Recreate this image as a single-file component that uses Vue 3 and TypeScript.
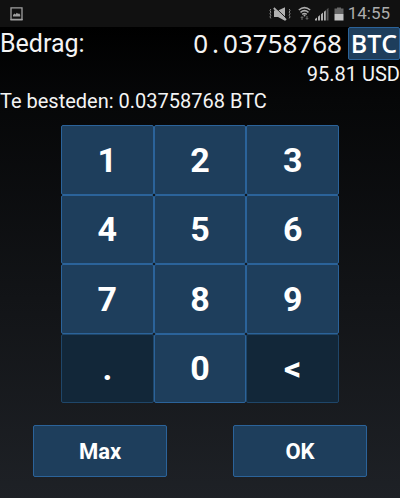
<script setup lang="ts">
import { computed, ref } from 'vue'

const time = '14:55'
const amount = ref('0.03758768')
const currency = ref('BTC')
const fiat = '95.81 USD'
const spendable = '0.03758768'
const keys: string[] = ['1', '2', '3', '4', '5', '6', '7', '8', '9', '.', '0', '<']

const parts = computed(() => amount.value.split('.'))
const isMuted = (key: string): boolean => key === '.' || key === '<'

function press(key: string): void {
  if (key === '<') {
    amount.value = amount.value.slice(0, -1) || '0'
  } else if (key !== '.' || !amount.value.includes('.')) {
    amount.value += key
  }
}

function useMax(): void {
  amount.value = spendable
}
</script>

<template>
  <div class="screen">
    <header class="status">
      <svg class="picture" width="13" height="14" viewBox="0 0 13 14" aria-hidden="true">
        <path d="M1 .9h11v11.4H1z" fill="none" stroke="#a0a0a0" stroke-width="1.3" />
        <path d="M.4 12h12.2v1.5H.4z" fill="#a0a0a0" />
        <path d="M3 9.5V8l1.5-1.4L5.6 7.5l1.2-1.8L8.2 7l.8-.7 1.2 1.4v1.8z" fill="#a0a0a0" />
      </svg>
      <div class="indicators">
        <svg width="22" height="14" viewBox="0 0 22 14" aria-hidden="true">
          <path d="M1.800 2l-.8 1.500.8 1.600-.8 1.600.8 1.600-.8 1.600.8 1.500M20.200 2l.8 1.500-.8 1.600.8 1.600-.8 1.600.8 1.600-.8 1.500" fill="none" stroke="#8c8c8c" stroke-width="1" />
          <path d="M5 3.500H9l7-3.300v13.600L9 10H5z" fill="#b0b0b0" />
          <path d="M6.200.6L18 11.800" stroke="#111" stroke-width="1" />
          <path d="M4.800 1L17 13" stroke="#b0b0b0" stroke-width="1.800" />
        </svg>
        <svg class="wifi" width="13" height="15" viewBox="0 0 13 15" aria-hidden="true">
          <path d="M.8 4Q6.500-.8 12.200 4M2.500 6.300Q6.500 3 10.500 6.300M4.200 8.300Q6.500 6.600 8.800 8.300" fill="none" stroke="#acacac" stroke-width="1.500" />
          <circle cx="6.500" cy="9.500" r="1" fill="#acacac" />
          <path d="M4 10l1.800 2H4.600v2H3.400v-2H2.200zM9 14l-1.800-2h1.200v-2h1.200v2h1.200z" fill="#606060" />
        </svg>
        <svg class="signal" width="14" height="14" viewBox="0 0 14 14" aria-hidden="true">
          <path d="M0 13.500V12l2-1.500v3zM3 13.500V9.700l2-1.600v5.400zM6 13.500V7.200l2-1.700v8zM9 13.500V4.800l1.800-1.600v10.300z" fill="#b0b0b0" />
          <path d="M11.600 13.500V2.500L13.500.8v12.700z" fill="#555" />
        </svg>
        <svg class="battery" width="10" height="14" viewBox="0 0 10 14" aria-hidden="true">
          <path d="M.5 1.500H3V.5h4v1h2.500V7h-9z" fill="#666" />
          <path d="M.5 7h9v6.500h-9z" fill="#c4c4c4" />
        </svg>
        <time>{{ time }}</time>
      </div>
    </header>

    <main>
      <section class="amount-row">
        <span class="label">Bedrag:</span>
        <output class="amount">{{ parts[0] }}<span v-if="parts.length > 1" class="point">.</span>{{ parts[1] }}</output>
        <button type="button" class="key unit">{{ currency }}</button>
      </section>
      <p class="fiat">{{ fiat }}</p>
      <p class="spendable">Te besteden: {{ spendable }} BTC</p>

      <div class="keypad">
        <button
          v-for="key in keys"
          :key="key"
          type="button"
          class="key digit"
          :class="{ muted: isMuted(key) }"
          @click="press(key)"
        >{{ key }}</button>
      </div>

      <div class="actions">
        <button type="button" class="key action" @click="useMax">Max</button>
        <button type="button" class="key action">OK</button>
      </div>
    </main>
  </div>
</template>

<style>
body {
  background: #1e2126;
}
</style>

<style scoped>
.screen {
  min-height: 100vh;
  box-sizing: border-box;
  background: linear-gradient(#000 27px, #060708 100px, #1e2126 100%);
  color: #f4f4f4;
  font-family: Roboto, "Liberation Sans", sans-serif;
}

.status {
  display: flex;
  align-items: center;
  justify-content: space-between;
  height: 27px;
  padding: 0 10px;
  background: #111;
  color: #acacac;
}

.indicators {
  display: flex;
  align-items: center;
}

.wifi {
  margin-left: 7px;
}

.signal {
  margin-left: 4px;
}

.battery {
  margin-left: 5px;
}

time {
  margin-left: 4px;
  font-size: 17px;
  line-height: 27px;
}

.amount-row {
  display: flex;
  align-items: center;
  height: 33px;
}

.label {
  flex: 1;
  font-size: 25px;
}

.amount {
  margin-right: 6px;
  font-family: "Noto Sans", "Open Sans", sans-serif;
  font-size: 26px;
  line-height: 33px;
}

.point {
  display: inline-block;
  width: 15px;
  text-align: center;
}

.key {
  box-sizing: border-box;
  margin: 0;
  padding: 0;
  border: 1px solid #2b639a;
  border-radius: 2px;
  background: #1e3e5c;
  color: #fff;
  font-family: inherit;
  font-weight: 700;
  cursor: pointer;
}

.unit {
  width: 52px;
  height: 33px;
  font-family: "Open Sans", "Noto Sans", sans-serif;
  font-size: 25px;
  font-weight: 600;
  line-height: 31px;
}

p {
  margin: 0;
  font-size: 20px;
  line-height: 28px;
}

.fiat {
  text-align: right;
}

.spendable {
  line-height: 26px;
}

.keypad {
  display: grid;
  grid-template-columns: repeat(3, 1fr);
  grid-template-rows: repeat(4, 1fr);
  width: 70%;
  max-width: 278px;
  height: 278px;
  margin: 11px auto 0;
}

.digit {
  font-size: 34px;
}

.muted {
  border-color: #1f4669;
  background: #122739;
}

.actions {
  display: grid;
  grid-template-columns: 1fr 1fr;
  justify-items: center;
  margin-top: 22px;
  padding-bottom: 20px;
}

.action {
  width: 67%;
  height: 52px;
  font-size: 22px;
}
</style>
